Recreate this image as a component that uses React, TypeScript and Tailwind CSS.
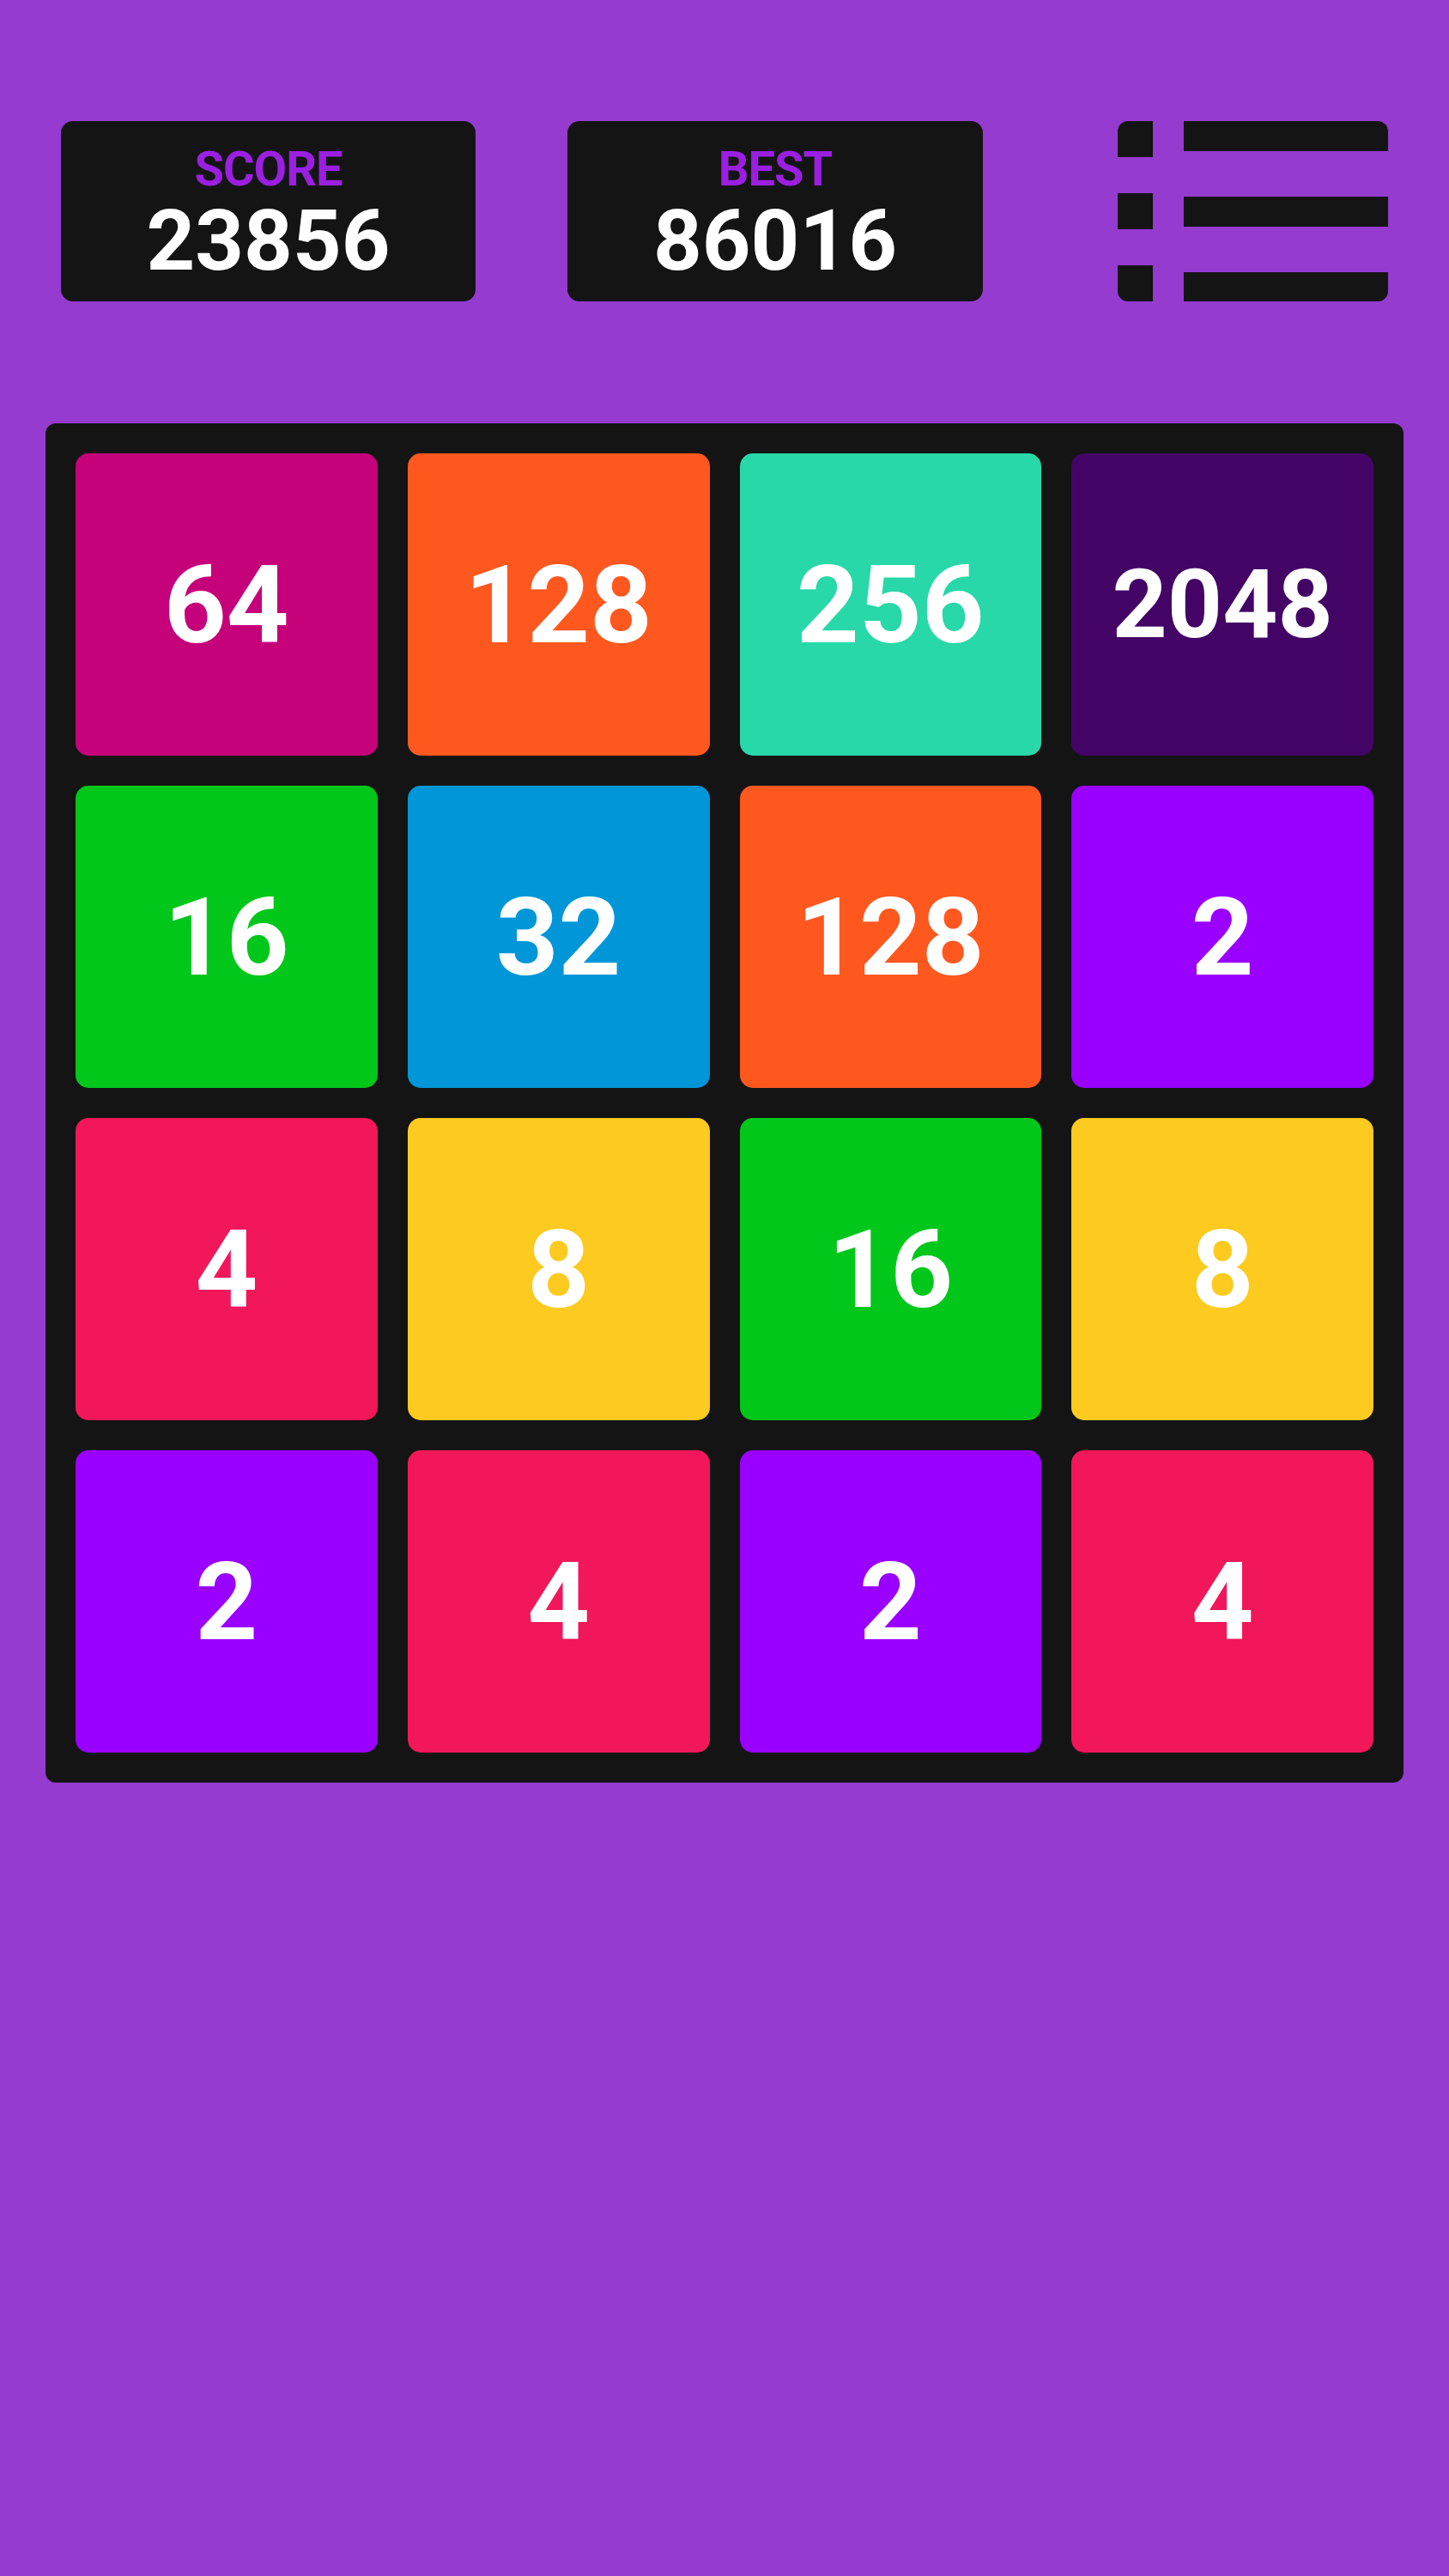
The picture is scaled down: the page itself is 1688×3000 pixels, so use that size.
import React from "react";

const tiles: { v: string; bg: string; size?: string }[] = [
  { v: "64", bg: "bg-[#c6027a]" },
  { v: "128", bg: "bg-[#ff581f]" },
  { v: "256", bg: "bg-[#28d8a8]" },
  { v: "2048", bg: "bg-[#440466]", size: "small" },
  { v: "16", bg: "bg-[#00c71a]" },
  { v: "32", bg: "bg-[#0096d8]" },
  { v: "128", bg: "bg-[#ff581f]" },
  { v: "2", bg: "bg-[#9900ff]" },
  { v: "4", bg: "bg-[#f1175a]" },
  { v: "8", bg: "bg-[#fdca1f]" },
  { v: "16", bg: "bg-[#00c71a]" },
  { v: "8", bg: "bg-[#fdca1f]" },
  { v: "2", bg: "bg-[#9900ff]" },
  { v: "4", bg: "bg-[#f1175a]" },
  { v: "2", bg: "bg-[#9900ff]" },
  { v: "4", bg: "bg-[#f1175a]" },
];

function ScoreBox({ label, value }: { label: string; value: string }) {
  return (
    <div className="flex h-[210px] w-[484px] flex-col items-center rounded-[14px] bg-[#141414] pt-[28px]">
      <div className="text-[56px] font-bold leading-none tracking-[-1px] text-[#9b1fe0]">{label}</div>
      <div className="mt-[6px] text-[99px] font-bold leading-none text-white">{value}</div>
    </div>
  );
}

function MenuIcon() {
  return (
    <svg width="315" height="210" viewBox="0 0 315 210" className="block">
      <defs>
        <clipPath id="menuclip">
          <rect x="0" y="0" width="315" height="210" rx="12" ry="12" />
        </clipPath>
      </defs>
      <g clipPath="url(#menuclip)" fill="#141414">
        <rect x="0" y="0" width="41" height="42" />
        <rect x="77" y="0" width="238" height="35" />
        <rect x="0" y="84" width="41" height="42" />
        <rect x="77" y="88" width="238" height="35" />
        <rect x="0" y="168" width="41" height="42" />
        <rect x="77" y="176" width="238" height="34" />
      </g>
    </svg>
  );
}

export default function App() {
  return (
    <div
      className="min-h-[3000px] w-full bg-[#953bd0]"
      style={{ fontFamily: "Roboto, 'Liberation Sans', sans-serif" }}
    >
      <div className="flex items-start px-[71px] pt-[141px]">
        <ScoreBox label="SCORE" value="23856" />
        <div className="ml-[107px]">
          <ScoreBox label="BEST" value="86016" />
        </div>
        <div className="ml-[157px]">
          <MenuIcon />
        </div>
      </div>
      <div className="mt-[142px] flex justify-center">
        <div className="grid w-[1582px] grid-cols-4 gap-[35px] rounded-[12px] bg-[#141414] p-[35px]">
          {tiles.map((t, i) => (
            <div
              key={i}
              className={`flex h-[352px] items-center justify-center rounded-[15px] ${t.bg}`}
            >
              <span
                className={
                  t.size === "small"
                    ? "text-[112px] font-bold leading-none text-white"
                    : "text-[127px] font-bold leading-none text-white"
                }
              >
                {t.v}
              </span>
            </div>
          ))}
        </div>
      </div>
    </div>
  );
}
